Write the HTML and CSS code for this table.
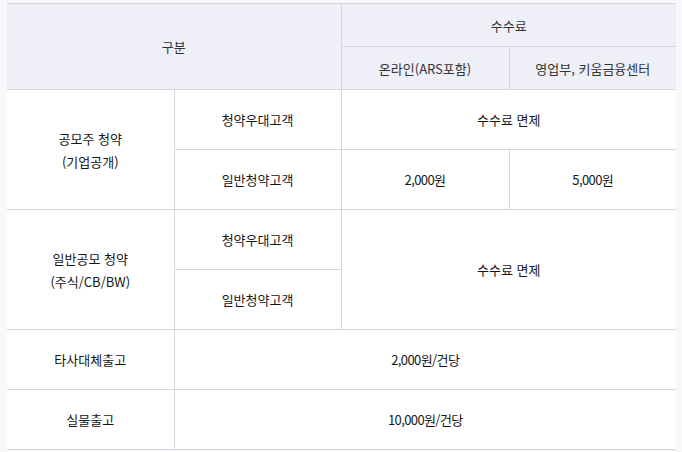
FILE: index.html
```html
<!DOCTYPE html>
<html lang="ko">
<head>
<meta charset="utf-8">
<title>수수료</title>
<link rel="stylesheet" href="styles.css">
</head>
<body>
<div class="wrap">
<table class="fee">
  <colgroup>
    <col class="c1"><col class="c2"><col class="c3"><col class="c4">
  </colgroup>
  <thead>
    <tr class="hr">
      <th colspan="2" rowspan="2">구분</th>
      <th colspan="2">수수료</th>
    </tr>
    <tr class="hr">
      <th>온라인(ARS포함)</th>
      <th>영업부, 키움금융센터</th>
    </tr>
  </thead>
  <tbody>
    <tr>
      <td rowspan="2">공모주 청약<br>(기업공개)</td>
      <td>청약우대고객</td>
      <td colspan="2">수수료 면제</td>
    </tr>
    <tr>
      <td>일반청약고객</td>
      <td class="num">2,000원</td>
      <td class="num">5,000원</td>
    </tr>
    <tr>
      <td rowspan="2">일반공모 청약<br>(주식/CB/BW)</td>
      <td>청약우대고객</td>
      <td colspan="2" rowspan="2">수수료 면제</td>
    </tr>
    <tr>
      <td>일반청약고객</td>
    </tr>
    <tr>
      <td>타사대체출고</td>
      <td colspan="3" class="num">2,000원/건당</td>
    </tr>
    <tr>
      <td>실물출고</td>
      <td colspan="3" class="num">10,000원/건당</td>
    </tr>
  </tbody>
</table>
</div>
</body>
</html>
```
FILE: styles.css
```css
html, body {
  margin: 0;
  padding: 0;
  background: #f8f8fa;
}
.wrap {
  padding: 3px 6px 0 7px;
}
.fee {
  width: 669px;
  border-collapse: collapse;
  table-layout: fixed;
  background: #fff;
  font-family: "Noto Sans CJK KR", "Noto Sans", sans-serif;
  font-size: 13px;
  color: #161616;
  border-top: 1px solid #c9c9d3;
  border-bottom: 1px solid #d6d6de;
}
.c1 { width: 167px; }
.c2 { width: 167px; }
.c3 { width: 168px; }
.c4 { width: 167px; }
.fee th, .fee td {
  border: 1px solid #d6d6de;
  text-align: center;
  vertical-align: middle;
  padding: 0;
  line-height: 23px;
  font-weight: 400;
}
.fee tr > :first-child { border-left: 0; }
.fee tr > :last-child { border-right: 0; }
.fee th {
  background: #efeff8;
  color: #333;
}
.hr { height: 43px; }
.fee tbody tr { height: 60px; }
.num { letter-spacing: -0.6px; }
```
